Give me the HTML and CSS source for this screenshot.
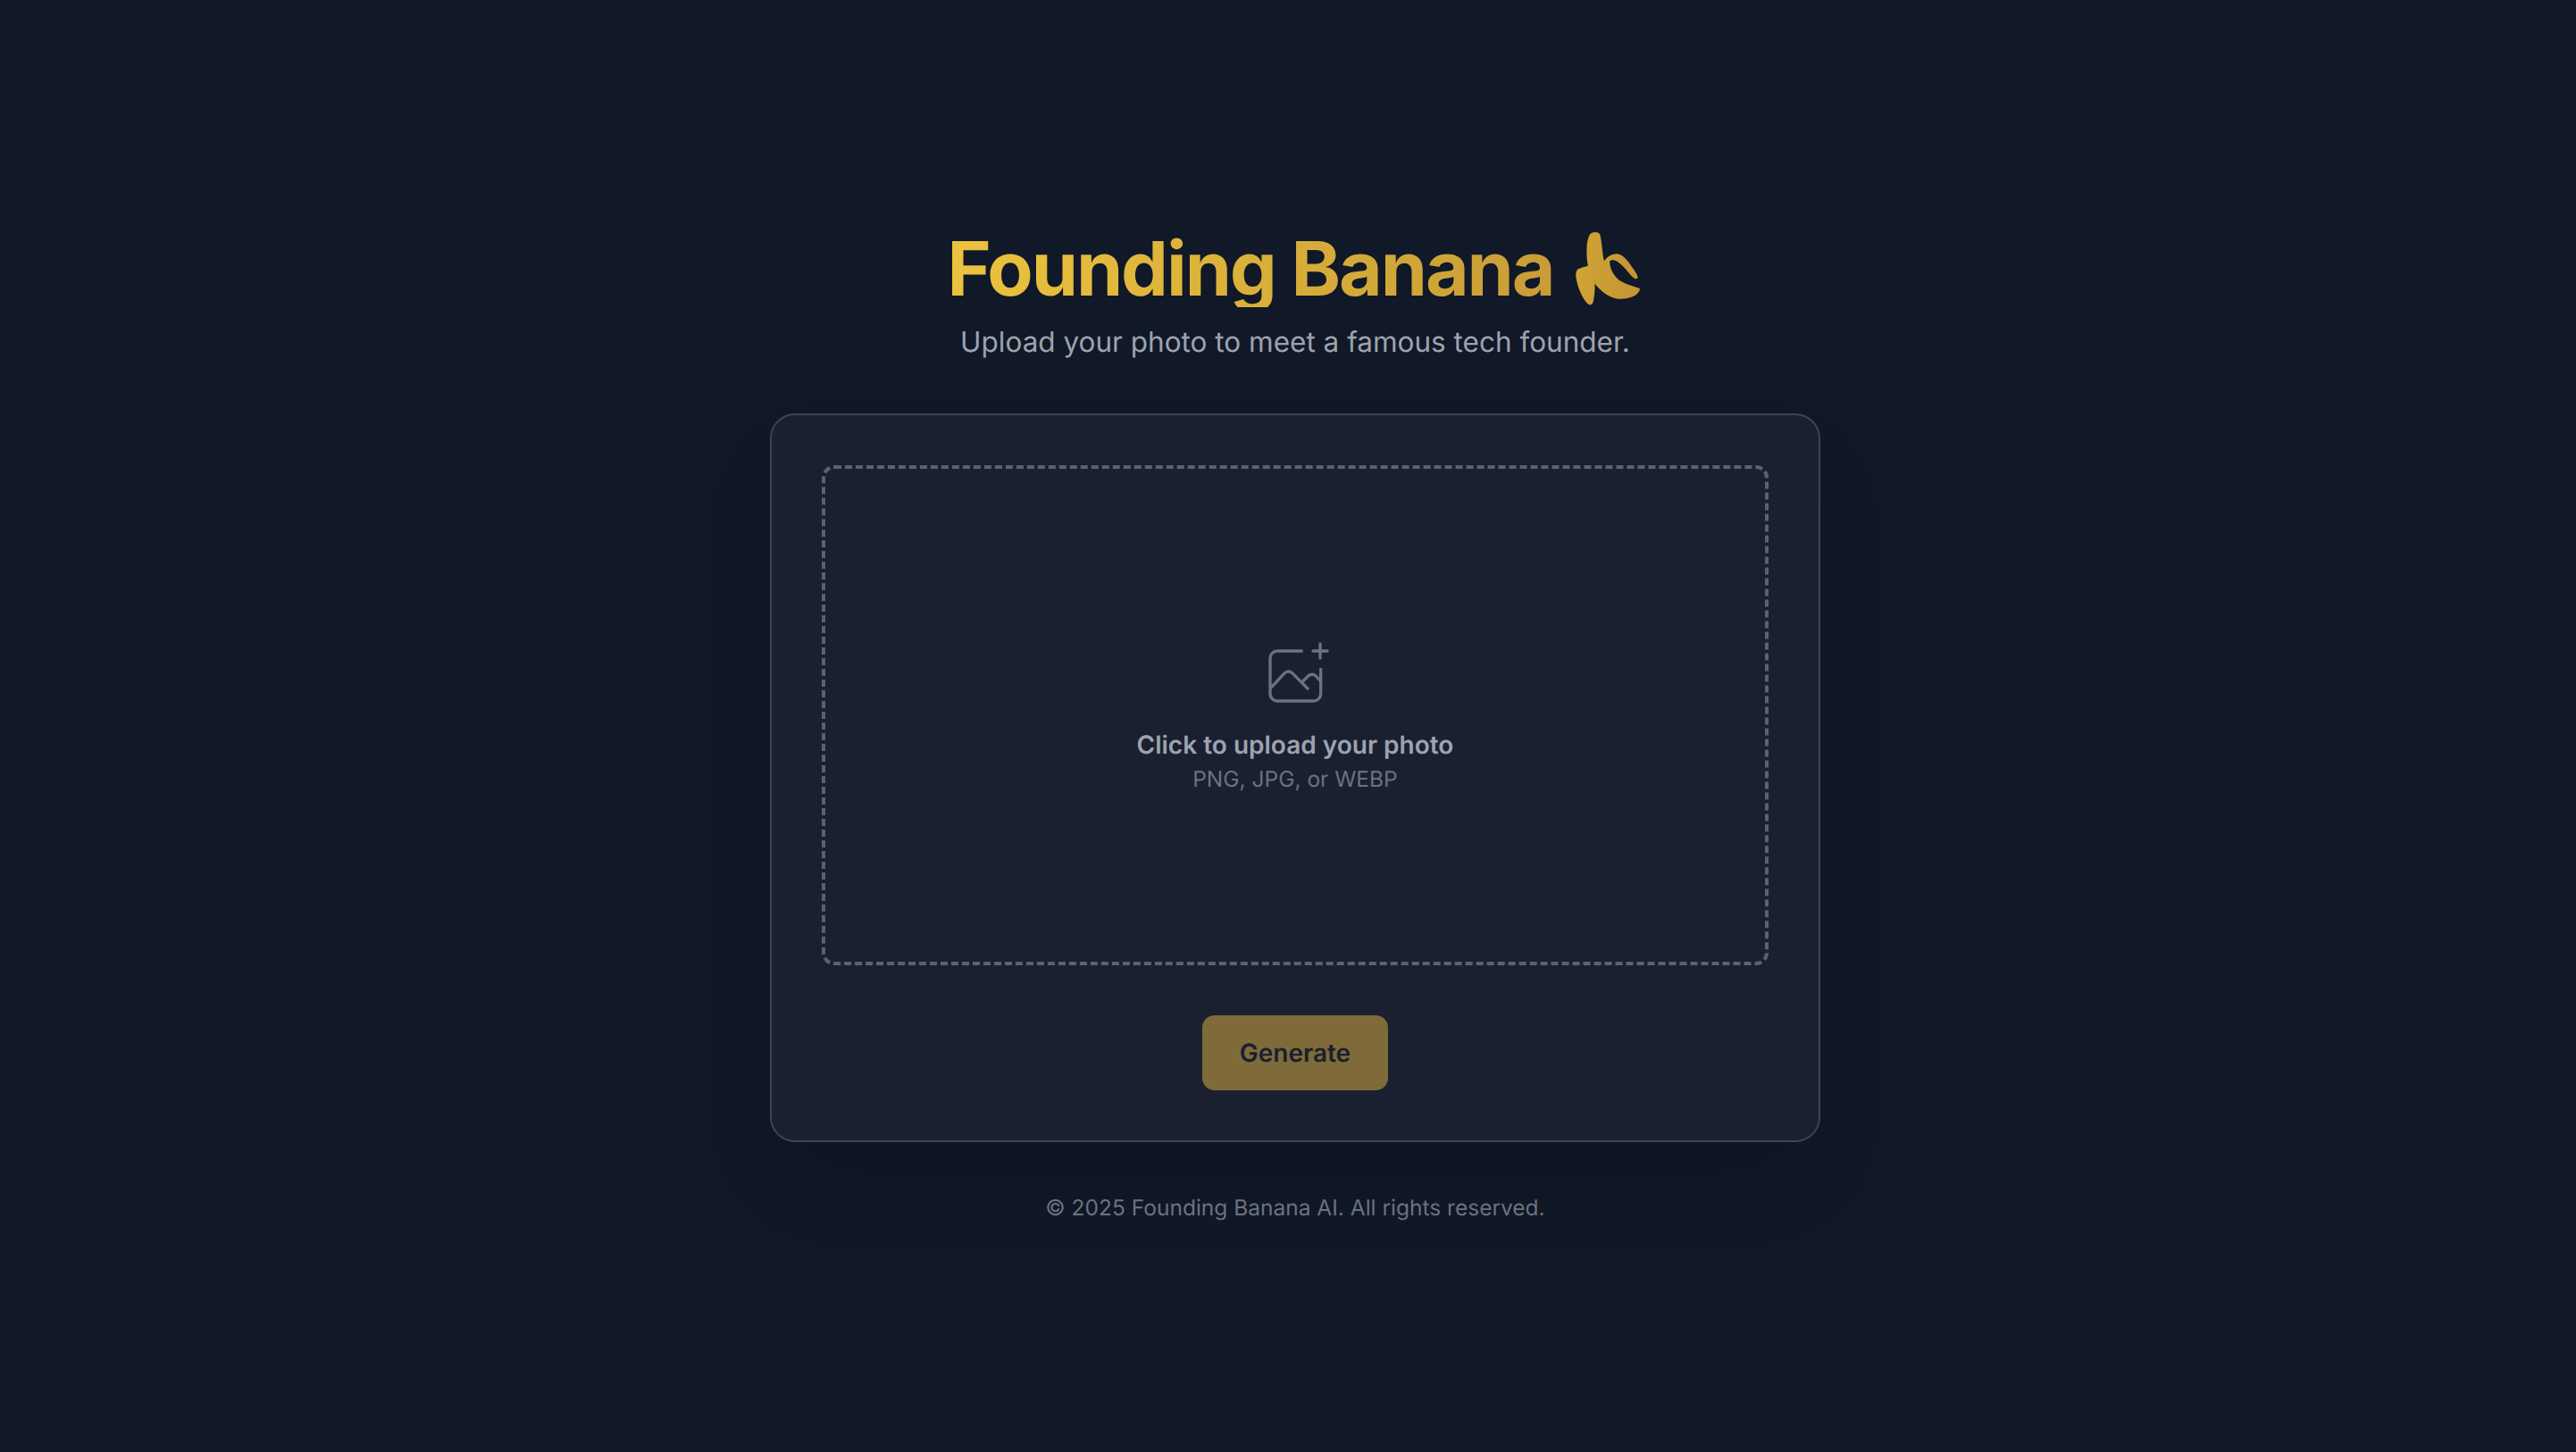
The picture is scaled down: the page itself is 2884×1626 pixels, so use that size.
FILE: index.html
```html
<!DOCTYPE html>
<html lang="en">
<head>
<meta charset="utf-8">
<title>Founding Banana</title>
<link rel="stylesheet" href="styles.css">
</head>
<body>
<main class="page">
  <header class="head">
    <h1 class="title"><span class="title-text">Founding Banana</span><svg class="banana" viewBox="60 50 235 265" aria-hidden="true"><defs><linearGradient id="bg" x1="0" y1="0" x2="1" y2="0"><stop offset="0" stop-color="#cfa336"/><stop offset="1" stop-color="#c49633"/></linearGradient></defs><path fill="url(#bg)" d="M122 62C132 57 146 58 151 66C158 90 158 125 165 156C178 140 192 131 210 132C232 136 248 160 262 180C270 192 279 204 279 213C276 219 268 216 262 211C245 195 232 172 208 157C198 152 186 152 184 158C184 180 196 205 216 221C236 235 262 240 285 249C288 256 280 266 268 274C245 285 218 288 195 280C170 270 148 252 134 232C134 255 133 280 127 298C122 306 116 306 110 301C92 282 78 250 72 220C68 205 70 190 76 184C88 178 100 176 111 172C106 150 105 118 108 95C110 82 114 68 122 62Z"/></svg></h1>
    <p class="subtitle">Upload your photo to meet a famous tech founder.</p>
  </header>
  <section class="card">
    <div class="dropzone">
      <svg class="upload-icon" viewBox="0 0 300 300" aria-hidden="true"><path d="M172 84H90A24 24 0 0 0 66 108V228A24 24 0 0 0 90 252H212A24 24 0 0 0 236 228V145"/><path d="M68 208L115 158Q127 148 140 158L192 210"/><path d="M176 186L195 167Q207 158 220 168L236 186"/><path d="M210 84H258M234 60V108"/></svg>
      <p class="drop-title">Click to upload your photo</p>
      <p class="drop-hint">PNG, JPG, or WEBP</p>
    </div>
    <button class="generate" type="button">Generate</button>
  </section>
  <footer class="foot">© 2025 Founding Banana AI. All rights reserved.</footer>
</main>
</body>
</html>
```
FILE: styles.css
```css
* { box-sizing: border-box; }
html, body { margin: 0; height: 100%; }
body {
  background: #111827;
  font-family: Inter, "Liberation Sans", sans-serif;
  color: #9ca3af;
  text-rendering: geometricPrecision;
}
.page {
  display: flex;
  flex-direction: column;
  align-items: center;
  padding-top: 260px;
  padding-left: 16px;
}
.head { display: flex; flex-direction: column; align-items: center; }
.title {
  margin: 0;
  display: flex;
  align-items: flex-start;
  font-size: 84px;
  font-weight: 700;
  line-height: 1;
  letter-spacing: -2.1px;
}
.title-text {
  background: linear-gradient(90deg, #ebc33e, #c89d36);
  -webkit-background-clip: text;
  background-clip: text;
  color: transparent;
}
.banana { width: 78px; height: 88px; margin: -3px 0 0 22px; }
.subtitle { margin: 14px 0 0; font-size: 31.5px; line-height: 47px; color: #9ca3af; }
.card {
  width: 1176px;
  margin-top: 57px;
  padding: 56px;
  display: flex;
  flex-direction: column;
  align-items: center;
  gap: 56px;
  background: #1a2030;
  border: 2px solid #3d4452;
  border-radius: 28px;
  box-shadow: 0 50px 100px -24px rgba(0, 0, 0, .2);
}
.dropzone {
  width: 100%;
  height: 560px;
  padding-bottom: 11px;
  display: flex;
  flex-direction: column;
  align-items: center;
  justify-content: center;
  border: 4px dashed #5a6170;
  border-radius: 14px;
}
.upload-icon {
  width: 100px;
  height: 100px;
  margin-bottom: 12px;
  fill: none;
  stroke: #6b7280;
  stroke-width: 10;
  stroke-linecap: round;
  stroke-linejoin: round;
}
.drop-title { margin: 0; font-size: 28px; line-height: 42px; font-weight: 600; color: #9ca3af; }
.drop-hint { margin: 0; font-size: 24.5px; line-height: 35px; color: #6b7280; }
.generate {
  width: 208px;
  height: 84px;
  border: 0;
  border-radius: 14px;
  background: #7f6b39;
  color: #1a2030;
  font: 600 28px Inter, "Liberation Sans", sans-serif;
  text-rendering: geometricPrecision;
}
.foot { margin-top: 56px; font-size: 24.5px; line-height: 35px; color: #6b7280; }
```
